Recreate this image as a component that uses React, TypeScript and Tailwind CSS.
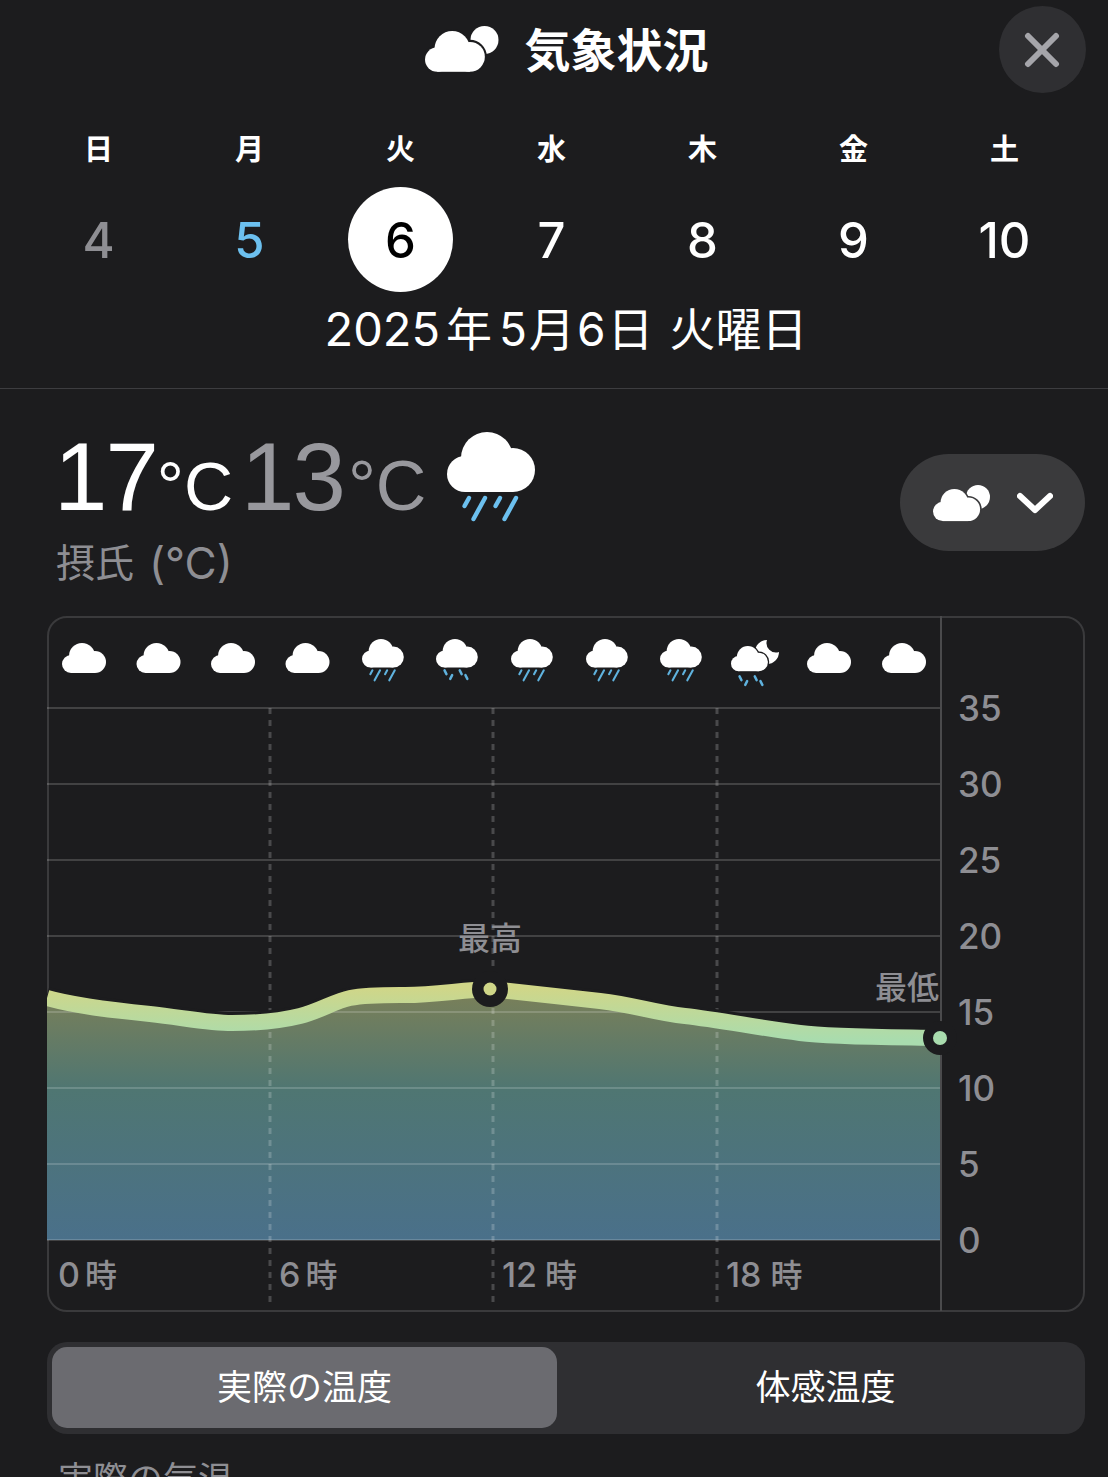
import { ReactNode } from 'react';

const BG = '#1c1c1e';
const days = [
    { label: '日', num: '4', tone: 'text-[#8e8e93]' },
    { label: '月', num: '5', tone: 'text-[#6cc0ef]' },
    { label: '火', num: '6', tone: 'text-black' },
    { label: '水', num: '7', tone: 'text-white' },
    { label: '木', num: '8', tone: 'text-white' },
    { label: '金', num: '9', tone: 'text-white' },
    { label: '土', num: '10', tone: 'text-white' },
];

const gridY = [708, 784, 860, 936, 1012, 1088, 1164, 1240];
const axis = [
    { t: '35', y: 708 },
    { t: '30', y: 784 },
    { t: '25', y: 860 },
    { t: '20', y: 936 },
    { t: '15', y: 1012 },
    { t: '10', y: 1088 },
    { t: '5', y: 1164 },
    { t: '0', y: 1240 },
];
const hours = [
    { t: '0', x: 59, gap: 5 },
    { t: '6', x: 280, gap: 5 },
    { t: '12', x: 503, gap: 8 },
    { t: '18', x: 727, gap: 9 },
];

const curve =
    'M47 998 C75 1006 110 1010 150 1014 C185 1018 210 1023 232 1023 C255 1023 280 1021 300 1016 C320 1011 335 1001 350 998 C365 995 385 995 400 995 C430 996 460 990 490 989 C520 992 565 997 600 1001 C635 1005 655 1013 685 1016 C720 1020 760 1028 800 1033 C830 1037 880 1037 941 1038';

// cloud silhouette, 44 x 30 box
const cloudShapes = (
    <>
        <circle cx="20" cy="13" r="13" />
        <circle cx="33" cy="19" r="11" />
        <circle cx="9" cy="21" r="9" />
        <rect x="9" y="18" width="24" height="12" />
    </>
);

const Cloud = ({ x, y, s = 1, outline = 0, cut = BG }: { x: number; y: number; s?: number; outline?: number; cut?: string }) => (
    <g transform={`translate(${x} ${y}) scale(${s})`}>
        {outline > 0 && (
            <g fill={cut} stroke={cut} strokeWidth={outline}>
                {cloudShapes}
            </g>
        )}
        <g fill="#fff">{cloudShapes}</g>
    </g>
);

const Drops = ({ x, y, s = 1, light = false, color = '#6cc0ef' }: { x: number; y: number; s?: number; light?: boolean; color?: string }) => (
    <g transform={`translate(${x} ${y}) scale(${s})`} stroke={color} strokeWidth={light ? 2.6 : 2.2} strokeLinecap="round">
        {light ? (
            <>
                <path d="M9 33 L11 37" />
                <path d="M15 42 L17 38" />
                <path d="M25 33 L27 37" />
                <path d="M33 42 L31 38" />
            </>
        ) : (
            <>
                <path d="M11 33 L8.75 37" />
                <path d="M19 33 L13.25 43.5" />
                <path d="M26.5 33 L24.25 37" />
                <path d="M34.5 33 L28.75 43.5" />
            </>
        )}
    </g>
);

const Icon = ({ className, children, box }: { className: string; children: ReactNode; box: string }) => (
    <svg className={className} viewBox={box} aria-hidden="true">
        {children}
    </svg>
);

const App = () => {
    return (
        <div className={`h-[1477px] w-[1108px] overflow-hidden bg-[#1c1c1e] font-[Inter,'Noto_Sans_CJK_JP',sans-serif] text-white`}>
            <header className="relative flex h-[100px] items-center justify-center pl-[24px]">
                <Icon className="mr-[25px] h-[50px] w-[76px]" box="425 24 76 50">
                    <circle cx="485.5" cy="39" r="14" fill="#fff" />
                    <Cloud x={426} y={30} s={1.36} outline={3} />
                </Icon>
                <h1 className="text-[46px] leading-none font-bold">気象状況</h1>
                <button className="absolute top-[6px] right-[22px] flex size-[87px] items-center justify-center rounded-full bg-[#2f2f32]">
                    <svg className="size-[38px]" viewBox="0 0 38 38" fill="none" stroke="#a5a5aa" strokeWidth="6" strokeLinecap="round">
                        <path d="M4 5 L32 33" />
                        <path d="M32 5 L4 33" />
                    </svg>
                </button>
            </header>

            <div className="ml-[23px] grid w-[1057px] grid-cols-7">
                {days.map((d) => (
                    <div key={d.label} className="flex flex-col items-center">
                        <span className="mt-[30px] text-[29px] leading-[40px] font-bold">{d.label}</span>
                        <span
                            className={`mt-[17px] flex size-[105px] items-center justify-center rounded-full pt-[2px] text-[49px] leading-none font-medium ${d.tone} ${d.num === '6' ? 'bg-white' : ''}`}
                        >
                            {d.num}
                        </span>
                    </div>
                ))}
            </div>

            <p className="mt-[8px] flex justify-center pl-[24px] text-[46px] leading-[58px]">
                <span className="text-[47px]">2025</span>
                <span className="ml-[6px]">年</span>
                <span className="ml-[7px] tracking-[2px]">5月6日</span>
                <span className="ml-[14px]">火曜日</span>
            </p>

            <div className="mt-[30px] border-t border-[#3d3d40]" />

            <section className="flex items-start justify-between pr-[23px] pl-[56px]">
                <div>
                    <div className="flex items-start">
                        <div className="mt-[40px] -ml-[2px] flex items-baseline font-['Liberation_Sans',sans-serif] leading-none">
                            <span className="text-[96px] tracking-[-2px]">17</span>
                            <span className="text-[68px]">°C</span>
                            <span className="ml-[8px] text-[96px] tracking-[-2px] text-[#98989d]">13</span>
                            <span className="ml-[4px] text-[70px] text-[#98989d]">°C</span>
                        </div>
                        <Icon className="mt-[43px] ml-[21px] h-[90px] w-[90px]" box="0 0 45 45">
                            <Cloud x={0} y={0} />
                            <Drops x={0} y={0} />
                        </Icon>
                    </div>
                    <p className="mt-[13px] flex text-[39px] leading-[50px] text-[#8e8e93]">
                        <span>摂氏</span>
                        <span className="ml-[15px] text-[44px]">(°C)</span>
                    </p>
                </div>
                <button className="mt-[65px] flex h-[97px] w-[185px] items-center justify-center gap-[26px] rounded-full bg-[#3a3a3c]">
                    <Icon className="h-[38px] w-[58px]" box="932 482 58 38">
                        <circle cx="977" cy="495" r="12" fill="#fff" />
                        <Cloud x={932} y={487} s={1.07} outline={3} cut="#3a3a3c" />
                    </Icon>
                    <svg className="h-[24px] w-[36px]" viewBox="0 0 36 24" fill="none" stroke="#fff" strokeWidth="6" strokeLinecap="round" strokeLinejoin="round">
                        <path d="M3 5 L18 19 L33 5" />
                    </svg>
                </button>
            </section>

            <div className="mt-[28px] mr-[23px] ml-[47px] h-[696px] rounded-[20px] border-2 border-[#3a3a3c]">
                <svg className="block h-[692px] w-[1034px] overflow-visible" viewBox="49 618 1034 692">
                    <defs>
                        <linearGradient id="area" gradientUnits="userSpaceOnUse" x1="0" y1="990" x2="0" y2="1240">
                            <stop offset="0" stopColor="#7b8058" />
                            <stop offset="0.4" stopColor="#4f7672" />
                            <stop offset="1" stopColor="#4a708a" />
                        </linearGradient>
                        <linearGradient id="stroke" gradientUnits="userSpaceOnUse" x1="0" y1="988" x2="0" y2="1040">
                            <stop offset="0" stopColor="#d0d688" />
                            <stop offset="1" stopColor="#a9dcae" />
                        </linearGradient>
                        <clipPath id="plot">
                            <rect x="47" y="700" width="894" height="560" />
                        </clipPath>
                    </defs>

                    <path d={`${curve} L941 1240 L47 1240 Z`} fill="url(#area)" />

                    {gridY.map((y) => (
                        <line key={y} x1="47" x2="941" y1={y} y2={y} stroke="#fff" strokeOpacity="0.17" strokeWidth="2" />
                    ))}
                    {[270, 493, 717].map((x) => (
                        <line key={x} x1={x} x2={x} y1="708" y2="1305" stroke="#fff" strokeOpacity="0.2" strokeWidth="3" strokeDasharray="6 6" />
                    ))}
                    <line x1="941" x2="941" y1="616" y2="1311" stroke="#4a4a4c" strokeWidth="2" />

                    <g clipPath="url(#plot)">
                        <path d={curve} transform="translate(0 -3)" fill="none" stroke={BG} strokeWidth="16" />
                        <path d={curve} fill="none" stroke="url(#stroke)" strokeWidth="16" />
                    </g>

                    <circle cx="490" cy="989" r="18" fill={BG} />
                    <circle cx="490" cy="989" r="6.5" fill="#cfd688" />
                    <circle cx="940" cy="1038" r="17" fill={BG} />
                    <circle cx="940" cy="1038" r="7" fill="#a9dcae" />

                    <g fontSize="32" fill="#8e8e93" fontWeight="500">
                        <text x="490" y="950" textAnchor="middle">最高</text>
                        <text x="907" y="999" textAnchor="middle">最低</text>
                    </g>

                    {[84, 158.5, 233, 307.5, 829, 904].map((cx) => (
                        <Cloud key={cx} x={cx - 22} y={643} />
                    ))}
                    {[362, 511, 586, 660].map((x) => (
                        <g key={x}>
                            <Cloud x={x} y={639} s={0.95} />
                            <Drops x={x} y={639} s={0.95} color="#5fb2de" />
                        </g>
                    ))}
                    <Cloud x={436} y={639} s={0.95} />
                    <Drops x={436} y={639} s={0.95} light color="#5fb2de" />

                    <path d="M767 640 A12 12 0 1 0 779 652 A9.5 9.5 0 0 1 767 640 Z" fill="#fff" />
                    <Cloud x={731} y={646} s={0.84} outline={3} />
                    <Drops x={731} y={645} s={0.95} light color="#5fb2de" />

                    <g fontSize="35" fill="#8e8e93" fontWeight="500">
                        {axis.map((a) => (
                            <text key={a.t} x="958" y={a.y + 13}>{a.t}</text>
                        ))}
                    </g>
                    <g fontSize="34" fill="#8e8e93" fontWeight="500">
                        {hours.map((h) => (
                            <text key={h.t} x={h.x - 1} y="1287">
                                {h.t}
                                <tspan dx={h.gap} fontSize="32">時</tspan>
                            </text>
                        ))}
                    </g>
                </svg>
            </div>

            <div className="mt-[30px] mr-[23px] ml-[47px] flex h-[92px] rounded-[20px] bg-[#2f2f32] p-[5px]">
                <div className="flex h-[81px] w-[505px] items-center justify-center rounded-[15px] bg-[#6b6b70] text-[35px]">実際の温度</div>
                <div className="flex h-[81px] flex-1 items-center justify-center pl-[14px] text-[35px]">体感温度</div>
            </div>

            <p className="mt-[20px] ml-[58px] text-[35px] leading-[50px] text-[#8e8e93]">実際の気温</p>
        </div>
    );
};

export default App;
